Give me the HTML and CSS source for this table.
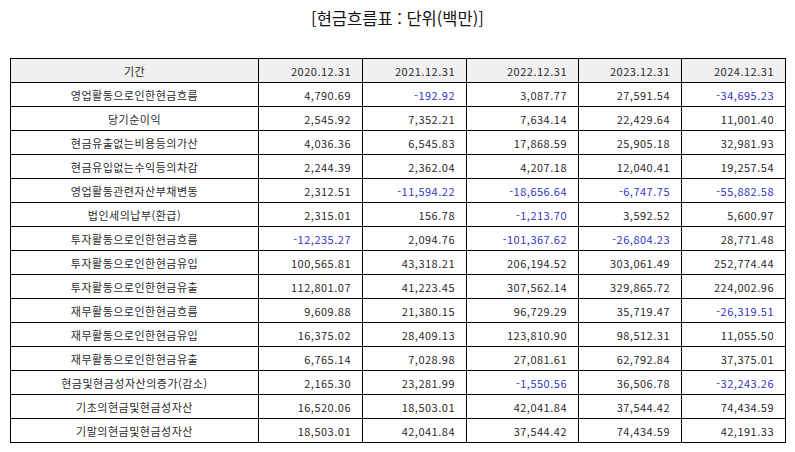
FILE: index.html
```html
<!DOCTYPE html>
<html lang="ko">
<head>
<meta charset="utf-8">
<title>현금흐름표</title>
<link rel="stylesheet" href="styles.css">
</head>
<body>
<div class="page">
  <h1 class="title">[현금흐름표 : 단위(백만)]</h1>
  <table class="grid">
    <colgroup>
      <col class="c-label"><col class="c-num"><col class="c-num"><col class="c-wide"><col class="c-num2"><col class="c-num">
    </colgroup>
    <thead>
      <tr><th class="lbl">기간</th><th>2020.12.31</th><th>2021.12.31</th><th>2022.12.31</th><th>2023.12.31</th><th>2024.12.31</th></tr>
    </thead>
    <tbody>
      <tr><td class="lbl">영업활동으로인한현금흐름</td><td>4,790.69</td><td class="neg">-192.92</td><td>3,087.77</td><td>27,591.54</td><td class="neg">-34,695.23</td></tr>
      <tr><td class="lbl">당기순이익</td><td>2,545.92</td><td>7,352.21</td><td>7,634.14</td><td>22,429.64</td><td>11,001.40</td></tr>
      <tr><td class="lbl">현금유출없는비용등의가산</td><td>4,036.36</td><td>6,545.83</td><td>17,868.59</td><td>25,905.18</td><td>32,981.93</td></tr>
      <tr><td class="lbl">현금유입없는수익등의차감</td><td>2,244.39</td><td>2,362.04</td><td>4,207.18</td><td>12,040.41</td><td>19,257.54</td></tr>
      <tr><td class="lbl">영업활동관련자산부채변동</td><td>2,312.51</td><td class="neg">-11,594.22</td><td class="neg">-18,656.64</td><td class="neg">-6,747.75</td><td class="neg">-55,882.58</td></tr>
      <tr><td class="lbl">법인세의납부(환급)</td><td>2,315.01</td><td>156.78</td><td class="neg">-1,213.70</td><td>3,592.52</td><td>5,600.97</td></tr>
      <tr><td class="lbl">투자활동으로인한현금흐름</td><td class="neg">-12,235.27</td><td>2,094.76</td><td class="neg">-101,367.62</td><td class="neg">-26,804.23</td><td>28,771.48</td></tr>
      <tr><td class="lbl">투자활동으로인한현금유입</td><td>100,565.81</td><td>43,318.21</td><td>206,194.52</td><td>303,061.49</td><td>252,774.44</td></tr>
      <tr><td class="lbl">투자활동으로인한현금유출</td><td>112,801.07</td><td>41,223.45</td><td>307,562.14</td><td>329,865.72</td><td>224,002.96</td></tr>
      <tr><td class="lbl">재무활동으로인한현금흐름</td><td>9,609.88</td><td>21,380.15</td><td>96,729.29</td><td>35,719.47</td><td class="neg">-26,319.51</td></tr>
      <tr><td class="lbl">재무활동으로인한현금유입</td><td>16,375.02</td><td>28,409.13</td><td>123,810.90</td><td>98,512.31</td><td>11,055.50</td></tr>
      <tr><td class="lbl">재무활동으로인한현금유출</td><td>6,765.14</td><td>7,028.98</td><td>27,081.61</td><td>62,792.84</td><td>37,375.01</td></tr>
      <tr><td class="lbl">현금및현금성자산의증가(감소)</td><td>2,165.30</td><td>23,281.99</td><td class="neg">-1,550.56</td><td>36,506.78</td><td class="neg">-32,243.26</td></tr>
      <tr><td class="lbl">기초의현금및현금성자산</td><td>16,520.06</td><td>18,503.01</td><td>42,041.84</td><td>37,544.42</td><td>74,434.59</td></tr>
      <tr><td class="lbl">기말의현금및현금성자산</td><td>18,503.01</td><td>42,041.84</td><td>37,544.42</td><td>74,434.59</td><td>42,191.33</td></tr>
    </tbody>
  </table>
</div>
</body>
</html>
```
FILE: styles.css
```css
html, body {
  margin: 0;
  padding: 0;
  background: #ffffff;
}
.page {
  padding: 6px 10px 0 10px;
  font-family: "Noto Sans CJK KR", "Noto Sans", sans-serif;
  color: #2a2a2a;
}
.title {
  margin: 0;
  height: 52px;
  font-size: 16.5px;
  font-weight: normal;
  line-height: 24px;
  text-align: center;
  color: #111111;
}
.grid {
  width: 775px;
  table-layout: fixed;
  border-collapse: collapse;
  font-size: 11px;
  letter-spacing: 0.5px;
}
.c-label { width: 248px; }
.c-num { width: 104px; }
.c-wide { width: 112px; }
.c-num2 { width: 103px; }
.grid th,
.grid td {
  border: 1px solid #000000;
  height: 23px;
  padding: 0 11px 0 4px;
  text-align: right;
  font-weight: normal;
  line-height: 14px;
  white-space: nowrap;
}
.grid th {
  background: #f0f0f0;
}
.grid .lbl {
  text-align: center;
  padding: 0 4px;
}
.grid .neg {
  color: #3333cc;
}
```
